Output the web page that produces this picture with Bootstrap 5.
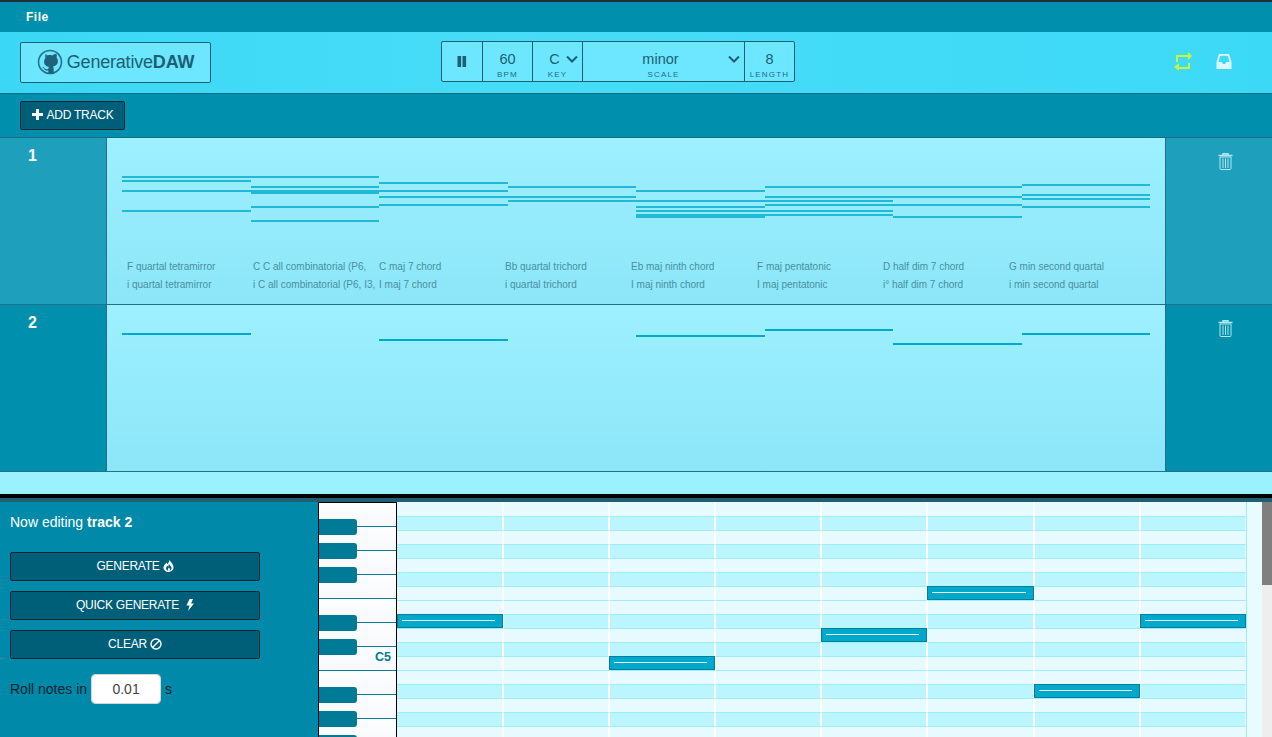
<!DOCTYPE html>
<html lang="en">
<head>
  <meta charset="UTF-8">
  <title>GenerativeDAW</title>
  <link href="https://cdn.jsdelivr.net/npm/bootstrap@5.3.0/dist/css/bootstrap.min.css" rel="stylesheet">
  <style>
    html, body { height: 100%; }
    body { overflow: hidden; font-family: "Liberation Sans", Arial, sans-serif; background: #9cf1ff; color: #1c5f75; }
    .menu-bar { height: 32px; border-top: 2px solid #1f2f36; background: #0090ae; padding-left: 26px; }
    .menu-item { color: #fff; font-size: 12px; font-weight: 700; letter-spacing: .5px; }
    .top-bar { height: 62px; padding: 0 40px 0 20px; border-bottom: 1px solid #176a82; background: linear-gradient(90deg, #3ad8f6, #47dcf8 40%, #3cd9f6); }
    .logo-btn { width: 191px; height: 41px; margin-top: -1px; border: 1px solid #1c6076; border-radius: 2px; background: #6ce7ff; color: #1c5f75; font-size: 18px; letter-spacing: -.2px; padding: 0; }
    .logo-btn:hover { background: #6ce7ff; color: #1c5f75; }
    .transport { width: 354px; height: 41px; margin-left: 230px; margin-top: -3px; border: 1px solid #1c6076; border-radius: 2px; background: #6ce7ff; }
    .cell { border-right: 1px solid #1c6076; text-align: center; }
    .cell:last-child { border-right: 0; }
    .cell-pause { width: 41px; }
    .cell-num { width: 50px; }
    .cell-scale { width: 162px; }
    .cell-len { flex: 1; }
    .cell-val, .cell select { font-size: 14.5px; line-height: 16px; height: 16px; color: #1c5f75; margin-top: 9px; }
    .cell-label { font-size: 8px; line-height: 9px; letter-spacing: 1.2px; color: #1f6d84; margin-top: 3px; }
    .cell select.form-select { padding: 0 6px 0 0; border: 0; border-radius: 0; background-color: transparent; box-shadow: none; text-align: center; text-align-last: center; font-family: inherit; background-position: right 4px center; background-size: 12px 8px; background-image: url("data:image/svg+xml,%3csvg xmlns='http://www.w3.org/2000/svg' viewBox='0 0 12 8'%3e%3cpath fill='none' stroke='%231c5f75' stroke-width='2' d='M1 1.500l5 5 5-5'/%3e%3c/svg%3e"); }
    .icon-slot { gap: 24px; margin-left: auto; margin-top: -2px; }
    .tool-bar { height: 44px; padding: 7px 20px 0; border-bottom: 1px solid #176a82; background: #0090ae; }
    .dark-btn { background: #005f78; border: 1px solid #04242e; border-radius: 2px; color: #fff; font-size: 12px; letter-spacing: -.25px; padding: 0 0 2px; height: 29px; }
    .dark-btn:hover { background: #005f78; color: #fff; border-color: #04242e; }
    .add-btn { width: 105px; }
    .track-row { height: 167px; border-bottom: 1px solid #23708a; }
    .track-side { background: #0090ae; }
    .track-row.is-first .track-side { background: #1e9fbb; }
    .track-num { width: 107px; border-right: 1px solid #23708a; color: #fff; font-size: 16px; font-weight: 700; padding: 6px 0 0 28px; }
    .track-del { width: 107px; border-left: 1px solid #23708a; padding: 15px 0 0 52px; line-height: 0; }
    .lane { flex: 1; position: relative; background: linear-gradient(180deg, #9df0ff, #8ce6f8); }
    .lane-note { position: absolute; height: 2px; background: #00a8cc; }
    .is-first .lane-note { background: #20bad6; }
    .chord-row { position: absolute; left: 20px; top: 120px; width: 1008px; }
    .chord-col { width: 126px; height: 36px; overflow: hidden; white-space: nowrap; font-size: 10px; line-height: 18px; color: #48909f; }
    .chord-col div { overflow: hidden; }
    .gap-strip { height: 22px; background: #9cf1ff; }
    .split-bar { height: 8px; border-top: 4px solid #000; background: #1e5f70; }
    .editor { height: 235px; overflow: hidden; background: #0089a8; }
    .edit-side { width: 318px; padding: 12px 0 0 10px; color: #fff; }
    .edit-title { font-size: 14px; line-height: 17px; margin-bottom: 21px; }
    .gen-btn { width: 250px; display: block; margin-bottom: 10px; }
    .roll-row { margin-top: 15px; font-size: 14px; color: #04242e; gap: 4px; }
    .roll-input { width: 70px; height: 30px; padding: 0; text-align: center; font-size: 14px; border-radius: 4px; border: 1px solid #d5d5d5; color: #444; }
    .piano { position: relative; width: 79px; height: 240px; background: repeating-linear-gradient(180deg, #fff 0, #f6f8fc 24px); border-left: 1px solid #000; border-right: 1px solid #000; border-top: 1px solid #000; }
    .key-black { position: absolute; left: 0; width: 38px; height: 16px; border-radius: 0 3px 3px 0; background: #007a96; }
    .key-line { position: absolute; height: 1px; right: 0; background: #0f7a94; }
    .key-name { position: absolute; right: 5px; top: 147px; font-size: 12.5px; line-height: 14px; font-weight: 700; color: #007a96; }
    .roll-wrap { position: relative; width: 849px; }
    .roll-line { display: grid; grid-template-columns: 107px 106px 106px 106px 106px 107px 106px 105px; height: 14px; }
    .roll-cell { background: #e6faff; border-top: 1px solid #9cecfa; border-right: 2px solid #fff; }
    .roll-cell:last-child { border-right: 1px solid #e6faff; }
    .roll-line:first-child .roll-cell { border-top: 0; }
    .roll-line.is-dark .roll-cell { background: #bbf5ff; }
    .roll-note { position: absolute; height: 14px; background: #00a8cc; border: 1px solid #00809c; }
    .roll-note::after { content: ""; position: absolute; left: 4px; right: 7px; top: 5px; height: 1px; background: #e8fbff; }
    .roll-end { flex: 1; background: #e8fbff; border-left: 1px solid #9cecfa; }
    .scroll-track { width: 10px; background: #eee; }
    .scroll-thumb { height: 83px; background: #7f7f7f; }
  </style>
</head>
<body>

  <div class="menu-bar d-flex align-items-center"><span class="menu-item">File</span></div>

  <div class="top-bar d-flex align-items-center">
    <a class="btn logo-btn d-flex align-items-center justify-content-center gap-1" href="#">
      <svg width="26" height="26" viewBox="0 0 26 26" fill="none">
        <circle cx="13" cy="13" r="11.500" stroke="#2a6f86" stroke-width="1.600"/>
        <path fill="#1f627a" d="M6.600 4.800c1.300-.1 2.900.7 3.900 1.600 1.600-.4 3.400-.4 5 0 1-.9 2.600-1.700 3.900-1.600.4 1.200.5 2.600.1 3.700.9 1 1.400 2.200 1.400 3.600 0 3.800-2.700 5-5 5.300.5.500.8 1.200.8 2.200v4.600c-1.700.5-3.700.5-5.400 0v-2.700c-2 .4-3.400-.1-4.400-1.900-.4-.7-.9-1.100-1.600-1.400.9-.3 1.700.2 2.300 1.100.7 1 1.900 1.200 3.700.6 0-.9.3-1.600.8-2.100-2.300-.3-5-1.500-5-5.300 0-1.400.5-2.600 1.400-3.600-.4-1.100-.3-2.500.1-3.700z"/>
      </svg>
      <span>Generative<b>DAW</b></span>
    </a>

    <div class="transport d-flex">
      <div class="cell cell-pause d-flex align-items-center justify-content-center">
        <svg width="10" height="11" viewBox="0 0 10 11" fill="#1c5f75"><rect x="0.500" width="3.600" height="11" rx=".6"/><rect x="5.500" width="3.600" height="11" rx=".6"/></svg>
      </div>
      <div class="cell cell-num"><div class="cell-val">60</div><div class="cell-label">BPM</div></div>
      <div class="cell cell-num">
        <select class="form-select"><option>C</option></select>
        <div class="cell-label">KEY</div>
      </div>
      <div class="cell cell-scale">
        <select class="form-select"><option>minor</option></select>
        <div class="cell-label">SCALE</div>
      </div>
      <div class="cell cell-len"><div class="cell-val">8</div><div class="cell-label">LENGTH</div></div>
    </div>

    <div class="icon-slot d-flex align-items-center">
      <svg width="18" height="19" viewBox="0 0 18 19" fill="none">
        <path d="M3 10V4H14M15 11V16H5" stroke="#c8f53c" stroke-width="2"/>
        <path d="M14 0l4 4-4 4zM5 11l-5 4 5 4z" fill="#c8f53c"/>
      </svg>
      <svg width="16" height="15" viewBox="0 0 16 15">
        <path fill="#dcf9ff" fill-rule="evenodd" d="M3 0H13L15.500 8V15H.5V8zM4.200 1.800L2.500 8H5.800l1 2h2.400l1-2H13.500L11.800 1.800z"/>
      </svg>
    </div>
  </div>

  <div class="tool-bar">
    <button class="btn dark-btn add-btn d-flex align-items-center justify-content-center gap-1" type="button">
      <svg width="11" height="11" viewBox="0 0 11 11" fill="#fff"><path d="M4 0h3v4h4v3H7v4H4V7H0V4h4z"/></svg>
      ADD TRACK
    </button>
  </div>

  <div id="tracks"></div>

  <div class="gap-strip"></div>
  <div class="split-bar"></div>

  <div class="editor d-flex">
    <div class="edit-side">
      <div class="edit-title">Now editing <b>track 2</b></div>
      <button class="btn dark-btn gen-btn" type="button">GENERATE
        <svg width="11" height="12" viewBox="0 0 11 12" fill="#fff"><path fill-rule="evenodd" d="M6 0c.4 2-.8 3-1.400 4C4.100 3.500 3.800 3 3.700 2.400 1.800 4 .5 5.700.5 7.500.5 10 2.700 12 5.500 12s5-2 5-4.700C10.500 5 8.500 2 6 0zM5.500 10.800c-1.300-.2-2.500-1-2.500-2.500 0-1 .6-1.900 1.300-2.900.3.600.6 1 1 1.300.3-1 .5-1.900.4-2.700 1.300 1.100 2.900 2.700 2.900 4.300 0 1.500-1.300 2.300-2.600 2.500 1-.4 1.200-1.200 1-1.900-.2-.5-.6-1-1-1.400-.4.5-1.200 1.300-1.100 2 .1.600.2 1 .6 1.300z"/></svg>
      </button>
      <button class="btn dark-btn gen-btn" type="button">QUICK GENERATE
        <svg class="ms-1" width="8" height="12" viewBox="0 0 8 12" fill="#fff"><path d="M3.500 0H7L5 4.500h3L2 12l1.500-5.500H.5z"/></svg>
      </button>
      <button class="btn dark-btn gen-btn" type="button">CLEAR
        <svg width="12" height="12" viewBox="0 0 12 12" fill="none" stroke="#fff" stroke-width="1.400"><circle cx="6" cy="6" r="5"/><path d="M2.500 9.500l7-7"/></svg>
      </button>
      <div class="roll-row d-flex align-items-center">
        <span>Roll notes in</span>
        <input class="form-control roll-input" type="text" value="0.01">
        <span>s</span>
      </div>
    </div>
    <div class="piano" id="piano"></div>
    <div class="roll-wrap" id="roll"></div>
    <div class="roll-end"></div>
    <div class="scroll-track"><div class="scroll-thumb"></div></div>
  </div>

<script>
  const trash = '<svg width="15" height="17" viewBox="0 0 15 17" fill="none" stroke="#b5e6ef" stroke-width="1"><path d="M5 2V.7h5V2M.5 2.500h14" stroke-width="1.400"/><path d="M2 4h11v11.500a1 1 0 0 1-1 1H3a1 1 0 0 1-1-1zM5 5.500v9.500M7.500 5.500v9.500M10 5.500v9.500"/></svg>';

  // [x1, x2, y] relative to the lane
  const col = [15, 144, 272, 401, 529, 658, 786, 915, 1043];
  const tracks = [
    {
      num: 1,
      notes: [
        [0, 2, 38], [0, 1, 42], [0, 1, 52], [0, 1, 72],
        [1, 2, 48], [1, 2, 52], [1, 2, 54], [1, 2, 68], [1, 2, 82],
        [2, 3, 44], [2, 3, 52], [2, 4, 58], [2, 3, 66],
        [3, 4, 48], [3, 6, 62],
        [4, 5, 52], [4, 5, 68], [4, 6, 72], [4, 5, 76], [4, 5, 78],
        [5, 7, 48], [5, 7, 58], [5, 7, 66], [5, 6, 76],
        [6, 7, 78],
        [7, 8, 46], [7, 8, 56], [7, 8, 60], [7, 8, 68]
      ],
      chords: [
        ['F quartal tetramirror', 'i quartal tetramirror'],
        ['C C all combinatorial (P6,', 'i C all combinatorial (P6, I3,'],
        ['C maj 7 chord', 'I maj 7 chord'],
        ['Bb quartal trichord', 'i quartal trichord'],
        ['Eb maj ninth chord', 'I maj ninth chord'],
        ['F maj pentatonic', 'I maj pentatonic'],
        ['D half dim 7 chord', 'i° half dim 7 chord'],
        ['G min second quartal', 'i min second quartal']
      ]
    },
    {
      num: 2,
      notes: [[0, 1, 28], [2, 3, 34], [4, 5, 30], [5, 6, 24], [6, 7, 38], [7, 8, 28]],
      chords: []
    }
  ];

  document.getElementById('tracks').innerHTML = tracks.map((t) => {
    const notes = t.notes.map((n) =>
      `<div class="lane-note" style="left:${col[n[0]]}px;width:${col[n[1]] - col[n[0]]}px;top:${n[2]}px"></div>`).join('');
    const chords = t.chords.map((c) =>
      `<div class="chord-col"><div>${c[0]}</div><div>${c[1]}</div></div>`).join('');
    return `<div class="track-row d-flex ${t.num === 1 ? 'is-first' : ''}">
      <div class="track-side track-num">${t.num}</div>
      <div class="lane">${notes}${chords ? `<div class="chord-row d-flex">${chords}</div>` : ''}</div>
      <div class="track-side track-del">${trash}</div>
    </div>`;
  }).join('');

  // piano keys, offsets from the top of the keyboard
  const piano = document.getElementById('piano');
  let keys = '';
  [16, 40, 64, 112, 136, 184, 208, 232].forEach((y) => {
    keys += `<div class="key-black" style="top:${y}px"></div>`;
    keys += `<div class="key-line" style="left:38px;top:${y + 7}px"></div>`;
  });
  [95, 167].forEach((y) => {
    keys += `<div class="key-line" style="left:0;top:${y}px"></div>`;
  });
  piano.innerHTML = keys + '<div class="key-name">C5</div>';

  // roll rows: 1 = black key row
  const rows = [0, 1, 0, 1, 0, 1, 0, 0, 1, 0, 1, 0, 0, 1, 0, 1, 0];
  const beatX = [0, 106, 212, 318, 424, 530, 637, 743, 849];
  const rollNotes = [[0, 8], [2, 11], [4, 9], [5, 6], [6, 13], [7, 8]];
  let roll = rows.map((d) =>
    `<div class="roll-line ${d ? 'is-dark' : ''}">${'<div class="roll-cell"></div>'.repeat(8)}</div>`).join('');
  roll += rollNotes.map((n) =>
    `<div class="roll-note" style="left:${beatX[n[0]]}px;width:${beatX[n[0] + 1] - beatX[n[0]]}px;top:${n[1] * 14}px"></div>`).join('');
  document.getElementById('roll').innerHTML = roll;
</script>
<script src="https://cdn.jsdelivr.net/npm/bootstrap@5.3.0/dist/js/bootstrap.bundle.min.js"></script>
</body>
</html>
